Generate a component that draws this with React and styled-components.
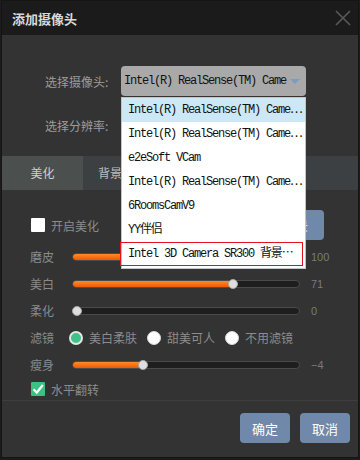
import React from 'react';
import styled, { createGlobalStyle } from 'styled-components';

const GlobalStyle = createGlobalStyle`
  html, body {
    margin: 0;
    padding: 0;
    background: #1c1c1c;
  }
  body {
    font-family: "Noto Sans CJK SC", "Noto Sans", sans-serif;
  }
`;

const cameras = [
  'Intel(R) RealSense(TM) Came⋯',
  'Intel(R) RealSense(TM) Came⋯',
  'e2eSoft VCam',
  'Intel(R) RealSense(TM) Came⋯',
  '6RoomsCamV9',
  'YY伴侣',
  'Intel 3D Camera SR300 背景⋯',
];

const sliders = [
  { label: '磨皮', value: '100', percent: 100 },
  { label: '美白', value: '71', percent: 71 },
  { label: '柔化', value: '0', percent: 0 },
];

const filters = [
  { label: '美白柔肤', checked: true },
  { label: '甜美可人', checked: false },
  { label: '不用滤镜', checked: false },
];

const Slider = ({ label, value, percent }) => (
  <SliderRow>
    <RowLabel>{label}</RowLabel>
    <Track>
      <Fill style={{ width: `${4 + percent * 2.2}px` }} />
      <Knob style={{ left: `${percent * 2.2 - 1}px` }} />
    </Track>
    <Value>{value}</Value>
  </SliderRow>
);

const App = () => {
  return (
    <>
      <GlobalStyle />
      <Dialog>
        <Header>
          <Title>添加摄像头</Title>
          <svg width='16' height='16' viewBox='0 0 16 16'>
            <path d='M1 1 L15 15 M15 1 L1 15' stroke='#585858' strokeWidth='1.7' />
          </svg>
        </Header>

        <Body>
          <FieldRow>
            <FieldLabel>选择摄像头:</FieldLabel>
            <SelectWrap>
              <SelectBox>
                <SelectText>Intel(R) RealSense(TM) Came</SelectText>
                <Arrow />
              </SelectBox>
              <Dropdown>
                {cameras.map((name, i) => (
                  <Option key={i} $active={i === 0} $marked={i === cameras.length - 1}>
                    {name}
                  </Option>
                ))}
              </Dropdown>
            </SelectWrap>
          </FieldRow>
          <FieldRow>
            <FieldLabel>选择分辨率:</FieldLabel>
            <SelectWrap>
              <SelectBox>
                <SelectText />
                <Arrow />
              </SelectBox>
            </SelectWrap>
          </FieldRow>
        </Body>

        <Tabs>
          <Tab $active>美化</Tab>
          <Tab>背景</Tab>
        </Tabs>

        <Panel>
          <ToggleRow>
            <CheckLabel>
              <CheckBox />
              开启美化
            </CheckLabel>
            <BlueButton>选择背景</BlueButton>
          </ToggleRow>

          {sliders.map((s) => (
            <Slider key={s.label} {...s} />
          ))}

          <SliderRow>
            <RowLabel $width={39}>滤镜</RowLabel>
            <RadioGroup>
              {filters.map((f) => (
                <RadioOption key={f.label}>
                  <Radio $checked={f.checked} />
                  {f.label}
                </RadioOption>
              ))}
            </RadioGroup>
          </SliderRow>

          <Slider label='瘦身' value='−4' percent={30} />

          <FlipRow>
            <CheckLabel>
              <CheckBox $checked>
                <svg width='14' height='14' viewBox='0 0 14 14'>
                  <path d='M2.5 7.2 L5.8 10.5 L11.8 3' stroke='#fff' strokeWidth='2.2' fill='none' />
                </svg>
              </CheckBox>
              水平翻转
            </CheckLabel>
          </FlipRow>
        </Panel>

        <Footer>
          <FooterButton>确定</FooterButton>
          <FooterButton>取消</FooterButton>
        </Footer>
      </Dialog>
    </>
  );
};

const Dialog = styled.div`
  box-sizing: border-box;
  width: 358px;
  height: 458px;
  margin-left: 1px;
  border: 1px solid #151515;
  background-color: #333333;
  display: flex;
  flex-direction: column;
`;

const Header = styled.div`
  height: 34px;
  flex-shrink: 0;
  background-color: #1b1b1b;
  display: flex;
  align-items: center;
  justify-content: space-between;
  padding: 0 7px 0 10px;
`;

const Title = styled.span`
  color: #d9d9d9;
  font-size: 13px;
  font-weight: bold;
`;

const Body = styled.div`
  padding: 31px 0 16px 43px;
  display: flex;
  flex-direction: column;
  gap: 14px;
`;

const FieldRow = styled.div`
  height: 30px;
  display: flex;
  align-items: center;
`;

const FieldLabel = styled.span`
  width: 76px;
  color: #9c9c9c;
  font-size: 12px;
`;

const SelectWrap = styled.div`
  position: relative;
  width: 185px;
  height: 30px;
`;

const SelectBox = styled.div`
  box-sizing: border-box;
  height: 100%;
  background-color: #a9a9a9;
  border-radius: 4px;
  padding-left: 3px;
  display: flex;
  align-items: center;
`;

const monoText = `
  font-family: "Liberation Mono", "Noto Sans CJK SC", monospace;
  font-size: 12px;
  letter-spacing: -1.2px;
  color: #111;
  white-space: nowrap;
`;

const SelectText = styled.span`
  ${monoText}
  width: 162px;
`;

const Arrow = styled.span`
  margin-left: 4px;
  width: 0;
  height: 0;
  border-left: 5px solid transparent;
  border-right: 5px solid transparent;
  border-top: 5px solid #7d9cc2;
`;

const Dropdown = styled.div`
  position: absolute;
  top: 31px;
  left: 0;
  width: 185px;
  box-sizing: border-box;
  background-color: #fff;
  border: 1px solid #c4c4c4;
  padding: 0 0 2px 0;
  z-index: 10;
`;

const Option = styled.div`
  ${monoText}
  position: relative;
  height: 24px;
  line-height: 24px;
  padding-left: 6px;
  background-color: ${(p) => (p.$active ? '#cce8f6' : 'transparent')};
  &::after {
    content: '';
    display: ${(p) => (p.$marked ? 'block' : 'none')};
    position: absolute;
    top: 0;
    bottom: 0;
    left: -2px;
    right: 2px;
    border: 1px solid #e3141b;
  }
`;

const Tabs = styled.div`
  height: 34px;
  flex-shrink: 0;
  background-color: #3d4042;
  display: flex;
`;

const Tab = styled.div`
  width: ${(p) => (p.$active ? '81px' : 'auto')};
  padding-left: ${(p) => (p.$active ? '0' : '15px')};
  text-align: ${(p) => (p.$active ? 'center' : 'left')};
  background-color: ${(p) => (p.$active ? '#4b4f4d' : 'transparent')};
  color: ${(p) => (p.$active ? '#d0d0d0' : '#bdbdbd')};
  font-size: 12px;
  line-height: 34px;
`;

const Panel = styled.div`
  height: 210px;
  flex-shrink: 0;
  box-sizing: border-box;
  padding: 20px 0 0 28px;
  display: flex;
  flex-direction: column;
`;

const ToggleRow = styled.div`
  height: 30px;
  margin-bottom: 3px;
  padding-right: 34px;
  display: flex;
  align-items: center;
  justify-content: space-between;
`;

const CheckLabel = styled.label`
  display: flex;
  align-items: center;
  gap: 6px;
  color: #8c8c8c;
  font-size: 12px;
`;

const CheckBox = styled.span`
  width: 14px;
  height: 14px;
  margin-left: 1px;
  border-radius: 1px;
  background-color: ${(p) => (p.$checked ? '#3cc181' : '#fff')};
  display: flex;
`;

const BlueButton = styled.div`
  width: 80px;
  height: 30px;
  border-radius: 4px;
  background-color: #7088a9;
  color: #fff;
  font-size: 12px;
  display: flex;
  align-items: center;
  justify-content: center;
`;

const SliderRow = styled.div`
  height: 27px;
  display: flex;
  align-items: center;
`;

const RowLabel = styled.span`
  width: ${(p) => p.$width || 42}px;
  color: #8a8a8a;
  font-size: 12px;
`;

const Track = styled.div`
  position: relative;
  box-sizing: border-box;
  width: 228px;
  height: 8px;
  border-radius: 4px;
  border: 1px solid #4a4a4a;
  background-color: #1e1e1e;
`;

const Fill = styled.div`
  height: 100%;
  border-radius: 3px;
  background: linear-gradient(#ff8a2a, #f05a00);
`;

const Knob = styled.div`
  position: absolute;
  top: -2px;
  box-sizing: border-box;
  width: 10px;
  height: 10px;
  border-radius: 50%;
  background-color: #dedede;
  border: 1px solid #a8a8a8;
`;

const Value = styled.span`
  margin-left: 11px;
  color: #7a7a7a;
  font-family: "Liberation Sans", sans-serif;
  font-size: 11px;
`;

const RadioGroup = styled.div`
  display: flex;
  gap: 10px;
`;

const RadioOption = styled.label`
  display: flex;
  align-items: center;
  gap: 6px;
  color: #8c8c8c;
  font-size: 12px;
`;

const Radio = styled.span`
  box-sizing: border-box;
  width: 14px;
  height: 14px;
  border-radius: 50%;
  background-color: ${(p) => (p.$checked ? '#3ec28a' : '#fff')};
  border: ${(p) => (p.$checked ? '2px solid #e6e6e6' : '1px solid #d8d8d8')};
`;

const FlipRow = styled.div`
  height: 22px;
  display: flex;
  align-items: center;
`;

const Footer = styled.div`
  border-top: 1px solid #3e3e3e;
  padding: 12px 8px 0 0;
  display: flex;
  justify-content: flex-end;
  gap: 10px;
`;

const FooterButton = styled.button`
  width: 50px;
  height: 30px;
  border: none;
  border-radius: 4px;
  background-color: #7088a9;
  color: #fff;
  font-family: "Noto Sans CJK SC", sans-serif;
  font-size: 13px;
  padding: 0;
  cursor: pointer;
`;

export default App;
